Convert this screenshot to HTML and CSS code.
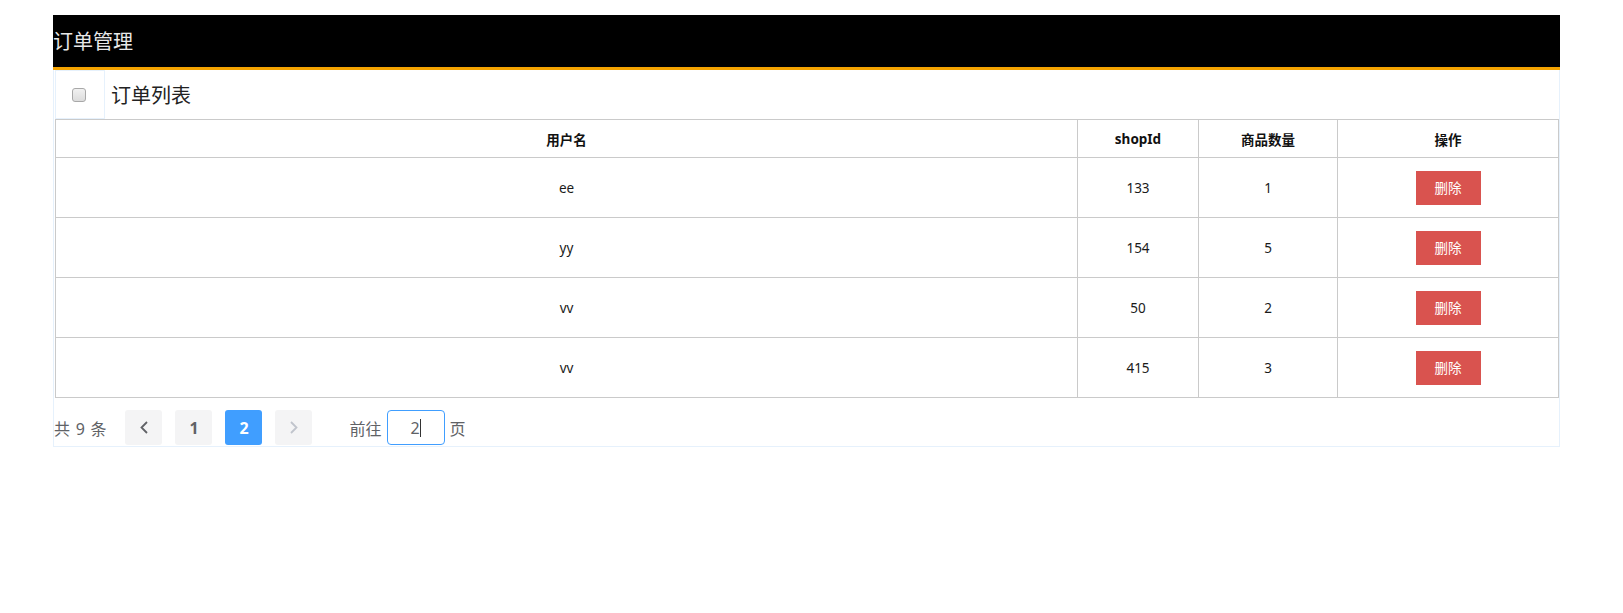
FILE: index.html
```html
<!DOCTYPE html>
<html lang="zh-CN">
<head>
<meta charset="utf-8">
<title>订单管理</title>
<link rel="stylesheet" href="styles.css">
</head>
<body>
<div class="page">
  <div class="header">订单管理</div>
  <div class="panel">
    <div class="toolbar">
      <div class="check-cell"><span class="checkbox"></span></div>
      <div class="toolbar-title">订单列表</div>
    </div>
    <table class="grid">
      <colgroup>
        <col class="c-user"><col class="c-shop"><col class="c-qty"><col class="c-op">
      </colgroup>
      <thead>
        <tr><th>用户名</th><th>shopId</th><th>商品数量</th><th>操作</th></tr>
      </thead>
      <tbody>
        <tr><td>ee</td><td>133</td><td>1</td><td><span class="btn-del">删除</span></td></tr>
        <tr><td>yy</td><td>154</td><td>5</td><td><span class="btn-del">删除</span></td></tr>
        <tr><td>vv</td><td>50</td><td>2</td><td><span class="btn-del">删除</span></td></tr>
        <tr><td>vv</td><td>415</td><td>3</td><td><span class="btn-del">删除</span></td></tr>
      </tbody>
    </table>
    <div class="pager">
      <span class="total">共 9 条</span>
      <span class="pbtn">
        <svg width="8" height="13" viewBox="0 0 8 13"><polyline points="7,1 1.5,6.5 7,12" fill="none" stroke="#606266" stroke-width="1.8"/></svg>
      </span>
      <span class="pbtn num">1</span>
      <span class="pbtn num active">2</span>
      <span class="pbtn disabled">
        <svg width="8" height="13" viewBox="0 0 8 13"><polyline points="1,1 6.5,6.5 1,12" fill="none" stroke="#c0c4cc" stroke-width="1.8"/></svg>
      </span>
      <span class="jump">前往</span>
      <span class="jump-input">2<span class="caret"></span></span>
      <span class="jump-after">页</span>
    </div>
  </div>
</div>
</body>
</html>
```

FILE: styles.css
```css
html, body {
  margin: 0;
  padding: 0;
  background: #fff;
}
body {
  font-family: "Noto Sans", "Noto Sans CJK SC", sans-serif;
  color: #222;
}
.page {
  padding: 15px 0 0 53px;
}
.header {
  width: 1507px;
  height: 52px;
  line-height: 54px;
  background: #000;
  border-bottom: 3px solid #f5a300;
  color: #e8e8e8;
  font-size: 20px;
  box-sizing: content-box;
}
.panel {
  width: 1505px;
  border: 1px solid #e6f1fc;
  border-top: none;
}
.toolbar {
  display: flex;
  align-items: stretch;
  height: 49px;
  margin-left: 1px;
}
.check-cell {
  width: 48px;
  border: 1px solid #e6f1fc;
  display: flex;
  align-items: center;
  justify-content: center;
}
.checkbox {
  width: 12px;
  height: 12px;
  border: 1px solid #a8a8a8;
  border-radius: 3px;
  background: linear-gradient(#f1f1f1, #dcdcdc);
  margin-left: -3px;
}
.toolbar-title {
  display: flex;
  align-items: center;
  padding-left: 6px;
  font-size: 20px;
  color: #222;
}
.grid {
  margin-left: 1px;
  width: 1504px;
  border-collapse: collapse;
  table-layout: fixed;
  border: 1px solid #cacaca;
}
.c-user { width: 1022px; }
.c-shop { width: 121px; }
.c-qty { width: 139px; }
.c-op { width: 221px; }
.grid th, .grid td {
  border: 1px solid #cacaca;
  text-align: center;
  padding: 0;
}
.grid th {
  height: 37px;
  font-size: 13.5px;
  font-weight: bold;
  color: #111;
}
.grid td {
  height: 59px;
  font-size: 13.5px;
  color: #1a1a1a;
}
.btn-del {
  display: inline-block;
  width: 65px;
  height: 34px;
  line-height: 34px;
  background: #d9534f;
  color: #fff;
  font-size: 13.5px;
  vertical-align: middle;
}
.pager {
  display: flex;
  align-items: center;
  height: 35px;
  padding: 12px 0 1px 0;
  color: #606266;
  font-size: 16px;
}
.total {
  margin-right: 19px;
  word-spacing: 1.5px;
}
.pbtn {
  width: 37px;
  height: 35px;
  margin-right: 13px;
  background: #f4f4f5;
  border-radius: 3px;
  display: flex;
  align-items: center;
  justify-content: center;
  font-weight: bold;
  color: #606266;
  font-size: 16px;
}
.pbtn.active {
  background: #409eff;
  color: #fff;
}
.pbtn.disabled {
  margin-right: 0;
}
.jump {
  margin-left: 37px;
  margin-right: 5px;
}
.jump-input {
  width: 56px;
  height: 33px;
  border: 1px solid #409eff;
  border-radius: 4px;
  display: flex;
  align-items: center;
  justify-content: center;
  color: #606266;
  font-size: 16px;
}
.caret {
  display: inline-block;
  width: 1px;
  height: 18px;
  background: #333;
}
.jump-after {
  margin-left: 5px;
}
```
